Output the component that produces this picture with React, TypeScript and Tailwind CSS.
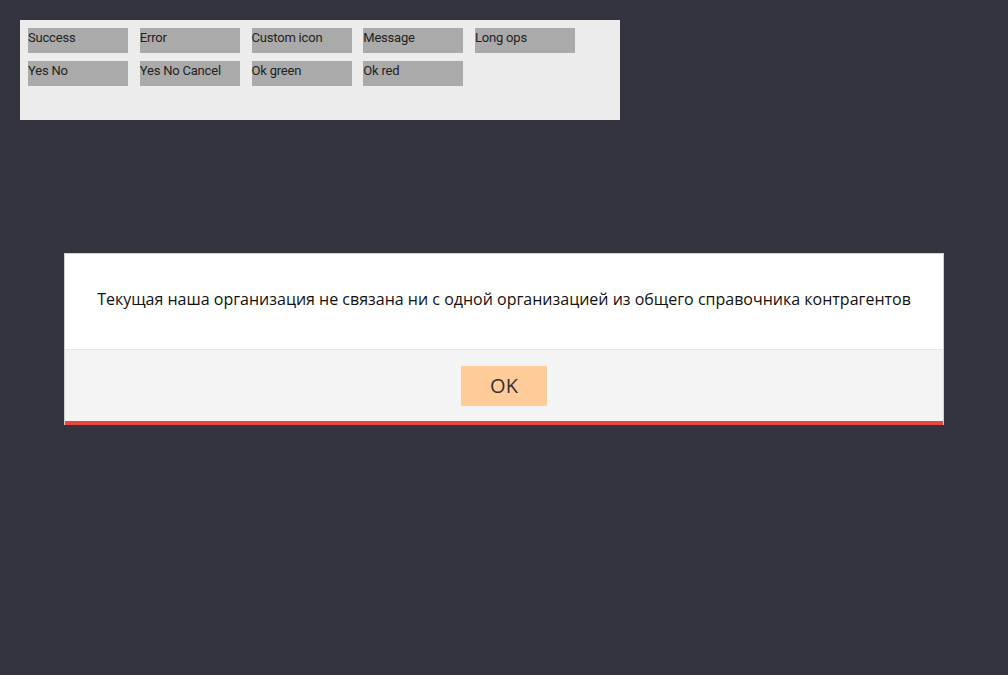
const buttons = [
  ['Success', 'Error', 'Custom icon', 'Message', 'Long ops'],
  ['Yes No', 'Yes No Cancel', 'Ok green', 'Ok red'],
];

export default function App() {
  return (
    <div className="min-h-screen w-full bg-[#34343e] pt-5 pl-5" style={{ minHeight: 675 }}>
      {/* demo buttons panel */}
      <div className="w-[600px] h-[100px] bg-[#ececec] p-2 flex flex-col gap-2 font-['Roboto',sans-serif]">
        {buttons.map((row, i) => (
          <div key={i} className="flex gap-[11.75px]">
            {row.map((label) => (
              <div
                key={label}
                className="w-[100px] h-[25px] bg-[#aaaaaa] text-[13px] leading-[20px] text-[#222] tracking-[-0.2px]"
              >
                {label}
              </div>
            ))}
          </div>
        ))}
      </div>

      {/* dialog */}
      <div className="mt-[133px] ml-[44px] w-[880px] border border-[#cfcfcf] border-b-0 font-['Open_Sans',sans-serif]">
        <div className="h-[95px] bg-white flex items-center justify-center pb-[5px] text-[16px] text-[#111]">
          Текущая наша организация не связана ни с одной организацией из общего справочника контрагентов
        </div>
        <div className="h-[76px] bg-[#f4f4f4] border-t border-[#e6e6e6] border-b-4 border-b-[#e8453c] flex justify-center pt-4">
          <div className="w-[86px] h-[40px] bg-[#ffcc99] flex items-center justify-center text-[20px] text-[#333]">
            OK
          </div>
        </div>
      </div>
    </div>
  );
}
